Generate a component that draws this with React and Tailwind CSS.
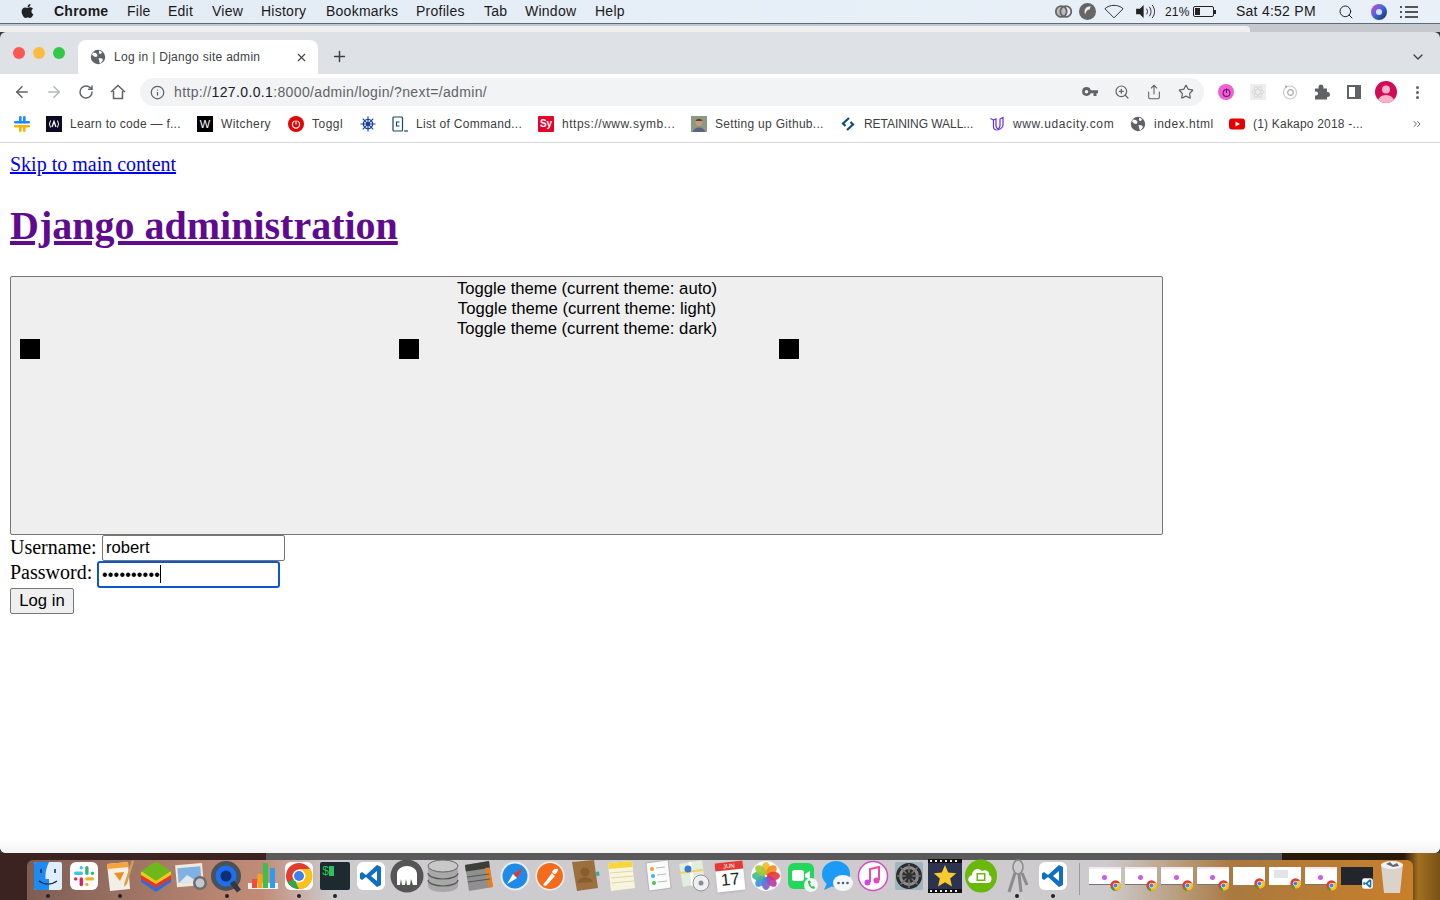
import React from 'react'
import {
  ArrowLeft,
  ArrowRight,
  ChevronDown,
  ChevronsRight,
  Info,
  Plus,
  RotateCw,
  Search,
  Share,
  Star,
  X,
  ZoomIn,
} from 'lucide-react'
import { FaApple } from 'react-icons/fa'

const sans = "font-['Liberation_Sans',Arial,sans-serif]"

const menuItems = [
  { label: 'File', w: 'w-[41px]' },
  { label: 'Edit', w: 'w-[44px]' },
  { label: 'View', w: 'w-[49px]' },
  { label: 'History', w: 'w-[65px]' },
  { label: 'Bookmarks', w: 'w-[90px]' },
  { label: 'Profiles', w: 'w-[68px]' },
  { label: 'Tab', w: 'w-[41px]' },
  { label: 'Window', w: 'w-[70px]' },
  { label: 'Help', w: 'w-[40px]' },
]

const Globe = ({ className }) => (
  <svg viewBox="0 0 16 16" className={className}>
    <circle cx="8" cy="8" r="7.2" fill="#5f6368" />
    <path d="M3 3.5l3 .5 1.5 2-1 2-2.5-.5L2 5.5zM9 1.5l3 1.5-1 2-2-.5zM8.5 9l3.5.5 1 1.5-2.5 3.500-1-1-.5-2.500z" fill="#fff" />
  </svg>
)

const SlackLogo = ({ className }) => (
  <svg viewBox="0 0 16 16" className={className}>
    <rect x="5" y="0" width="2.6" height="7.600" rx="1.300" fill="#1a8cff" />
    <rect x="9" y="0" width="2.6" height="7.600" rx="1.300" fill="#1a8cff" />
    <rect x="0" y="5" width="16" height="2.600" rx="1.300" fill="#1a8cff" />
    <rect x="0" y="9" width="16" height="2.600" rx="1.300" fill="#f7b500" />
    <rect x="5" y="9" width="2.6" height="7" rx="1.300" fill="#f7b500" />
    <rect x="9" y="9" width="2.6" height="7" rx="1.300" fill="#f7b500" />
  </svg>
)

const SlackGlyph = () => (
  <>
    <rect x="0" y="5" width="8" height="3" rx="1.500" fill="#36c5f0" />
    <rect x="5" y="0" width="3" height="3" rx="1.500" fill="#36c5f0" />
    <rect x="10" y="0" width="3" height="8" rx="1.500" fill="#2eb67d" />
    <rect x="15" y="5" width="3" height="3" rx="1.500" fill="#2eb67d" />
    <rect x="10" y="10" width="8" height="3" rx="1.500" fill="#ecb22e" />
    <rect x="10" y="15" width="3" height="3" rx="1.500" fill="#ecb22e" />
    <rect x="5" y="10" width="3" height="8" rx="1.500" fill="#e01e5a" />
    <rect x="0" y="10" width="3" height="3" rx="1.500" fill="#e01e5a" />
  </>
)

const bookmarkIcons = {
  code: (
    <svg viewBox="0 0 16 16" className="w-4 h-4">
      <rect width="16" height="16" fill="#0a0a23" />
      <path d="M4.500 4.500Q2.500 8 4.500 11.500M11.500 4.500Q13.500 8 11.500 11.500" stroke="#fff" strokeWidth="1" fill="none" />
      <path d="M6 11l2-5.500 2 5.500" stroke="#fff" strokeWidth="1.300" fill="none" />
    </svg>
  ),
  witchery: (
    <div className={`w-4 h-4 bg-black text-white text-[11px] leading-4 text-center ${sans}`}>W</div>
  ),
  toggl: (
    <svg viewBox="0 0 16 16" className="w-4 h-4">
      <circle cx="8" cy="8" r="8" fill="#e20505" />
      <circle cx="8" cy="8.500" r="3.600" fill="none" stroke="#fff" strokeWidth="1.200" />
      <path d="M8 4v4.500" stroke="#e20505" strokeWidth="3" />
      <path d="M8 4.500v4" stroke="#fff" strokeWidth="1.200" />
    </svg>
  ),
  helm: (
    <svg viewBox="0 0 16 16" className="w-4 h-4" fill="none" stroke="#1b3f9c">
      <circle cx="8" cy="8" r="4.600" strokeWidth="1.400" />
      <circle cx="8" cy="8" r="1.600" strokeWidth="1.200" />
      <path d="M8 .5v15M.5 8h15M2.700 2.700l10.600 10.600M13.300 2.700L2.700 13.300" strokeWidth="1.100" />
    </svg>
  ),
  command: (
    <svg viewBox="0 0 16 16" className="w-4 h-4" fill="none">
      <rect x="1" y="1" width="9.500" height="14" rx="1" stroke="#174a5b" strokeWidth="1.200" />
      <path d="M7.500 6H4.500v4h3" stroke="#174a5b" strokeWidth="1.200" />
      <path d="M12 15h4" stroke="#174a5b" strokeWidth="1.200" />
    </svg>
  ),
  symfony: (
    <div className={`w-4 h-4 bg-[#e8002d] rounded-[1px] text-white text-[10px] leading-4 text-center font-bold ${sans}`}>Sy</div>
  ),
  photo: (
    <svg viewBox="0 0 16 16" className="w-4 h-4">
      <rect width="16" height="16" fill="#8d9a80" />
      <circle cx="8" cy="6.500" r="3.400" fill="#c79a80" />
      <path d="M4.500 5c1-3 6-3 7 0z" fill="#59452f" />
      <path d="M2 16c.5-6 11.500-6 12 0z" fill="#5a6283" />
    </svg>
  ),
  retaining: (
    <svg viewBox="0 0 16 16" className="w-4 h-4" fill="none" stroke="#0f4c81" strokeWidth="2.200">
      <path d="M9 2L3 7.500l2.500 2.500" />
      <path d="M7 14l6-5.500-2.500-2.500" />
    </svg>
  ),
  udacity: (
    <svg viewBox="0 0 16 16" className="w-4 h-4" fill="none" stroke="#6b2cf5" strokeWidth="1.200">
      <path d="M1.500 2.500l3 1.500v6.500c0 2 1.500 3.500 3.500 3.500s6-2 6-5V1.500L11 3v6.500c0 2-1 3-2 3.500" />
      <path d="M4.500 4L7 3v7c0 1 .5 2 2 3" />
    </svg>
  ),
  globe: <Globe className="w-4 h-4" />,
  youtube: (
    <svg viewBox="0 0 16 16" className="w-4 h-4">
      <rect y="2.500" width="16" height="11" rx="3" fill="#e60000" />
      <path d="M6.500 5.500L11 8l-4.500 2.500z" fill="#fff" />
    </svg>
  ),
}

const bookmarks = [
  { icon: 'code', label: 'Learn to code — f...', w: 'w-[111px] tracking-[0.27px]' },
  { icon: 'witchery', label: 'Witchery', w: 'w-[51px] tracking-[0.42px]' },
  { icon: 'toggl', label: 'Toggl', w: 'w-[32px] tracking-[0.5px]' },
  { icon: 'helm' },
  { icon: 'command', label: 'List of Command...', w: 'w-[106px] tracking-[0.3px]' },
  { icon: 'symfony', label: 'https://www.symb...', w: 'w-[113px] tracking-[0.52px]' },
  { icon: 'photo', label: 'Setting up Github...', w: 'w-[109px] tracking-[0.3px]' },
  { icon: 'retaining', label: 'RETAINING WALL...', w: 'w-[109px] tracking-[-0.05px]' },
  { icon: 'udacity', label: 'www.udacity.com', w: 'w-[101px] tracking-[0.63px]' },
  { icon: 'globe', label: 'index.html', w: 'w-[59px] tracking-[0.5px]' },
  { icon: 'youtube', label: '(1) Kakapo 2018 -...', w: 'w-[109px] tracking-[0.2px]' },
]

const VsCode = () => (
  <svg viewBox="0 0 34 34" className="w-full h-full">
    <rect x="3" y="3" width="28" height="28" rx="6" fill="#fff" />
    <path d="M23 6l4 2v18l-4 2-11-10-4 3-2-1.500v-5L8 13l4 3zM23 12l-6 5 6 5z" fill="#0f6fc0" />
  </svg>
)

const dockIcons = [
  { key: 'finder', dot: true, icon: (
    <svg viewBox="0 0 34 34" className="w-full h-full">
      <rect x="3" y="3" width="28" height="28" rx="2" fill="#dfeefa" />
      <path d="M3 5a2 2 0 012-2h13c-3 6-4 12-3.500 17H18v11H5a2 2 0 01-2-2z" fill="#1f8af0" />
      <path d="M10 10v4M24 10v4" stroke="#0c2a4a" strokeWidth="1.500" />
      <path d="M8 22c5 4 13 4 18 0" stroke="#0c2a4a" strokeWidth="1.200" fill="none" />
    </svg>
  ) },
  { key: 'slack', icon: (
    <svg viewBox="0 0 34 34" className="w-full h-full">
      <rect x="3" y="3" width="28" height="28" rx="6" fill="#fff" />
      <g transform="translate(7 7) scale(1.120)"><SlackGlyph /></g>
    </svg>
  ) },
  { key: 'pages', dot: true, icon: (
    <svg viewBox="0 0 34 34" className="w-full h-full">
      <path d="M4 5l21-2 2 27-20 2z" fill="#f4efe6" />
      <path d="M4 5l21-2 .5 5L4.500 10z" fill="#f5a33a" />
      <path d="M11 14l10-1-4 9z" fill="#f58a1f" />
      <path d="M29 1l2 1-7 23-3 3 .5-4z" fill="#d9a04c" />
    </svg>
  ) },
  { key: 'bluestacks', icon: (
    <svg viewBox="0 0 34 34" className="w-full h-full">
      <path d="M2 20l15-7 15 7v3L17 33 2 23z" fill="#2b6fd6" />
      <path d="M2 16l15-7 15 7v4L17 29 2 20z" fill="#e53628" />
      <path d="M2 13l15-7 15 7v3L17 25 2 16z" fill="#f5c91c" />
      <path d="M2 12L14 4c2-1 4-1 6 0l12 8-15 10z" fill="#6fb81c" />
    </svg>
  ) },
  { key: 'preview', icon: (
    <svg viewBox="0 0 34 34" className="w-full h-full">
      <rect x="1" y="5" width="27" height="22" fill="#efe9dc" transform="rotate(-5 16 16)" />
      <rect x="3" y="8" width="23" height="15" fill="#7fb1e3" transform="rotate(-5 16 16)" />
      <path d="M4 24l8-8 8 5 6-2v4z" fill="#dfe8ee" />
      <circle cx="25" cy="24" r="7" fill="#6b6c6e" />
      <circle cx="25" cy="24" r="4.500" fill="#c4c8cc" />
    </svg>
  ) },
  { key: 'quicktime', dot: true, icon: (
    <svg viewBox="0 0 34 34" className="w-full h-full">
      <circle cx="16" cy="17" r="15" fill="#4a5258" />
      <circle cx="16" cy="17" r="10.500" fill="#1d6ff0" />
      <circle cx="16" cy="17" r="5.500" fill="#0e2f70" />
      <path d="M22 23l7 9" stroke="#33393e" strokeWidth="5" />
    </svg>
  ) },
  { key: 'numbers', icon: (
    <svg viewBox="0 0 34 34" className="w-full h-full">
      <path d="M2 24h30v6H2z" fill="#f1f1f1" />
      <rect x="6" y="20" width="5" height="9" fill="#f44b3f" />
      <rect x="11.500" y="15" width="5" height="14" fill="#f5a21c" />
      <rect x="17" y="4" width="5" height="25" fill="#3fbf49" />
      <rect x="24" y="9" width="5" height="20" fill="#2c9bf0" />
    </svg>
  ) },
  { key: 'chrome', dot: true, icon: (
    <svg viewBox="0 0 34 34" className="w-full h-full">
      <rect x="3" y="3" width="28" height="28" rx="6" fill="#fff" />
      <circle cx="17" cy="17" r="13" fill="#e33b2e" />
      <path d="M17 17L5.700 23.500A13 13 0 0017 30l6.500-6.500z" fill="#2fa84f" />
      <path d="M17 10h11.300A13 13 0 0117 30l-3-6z" fill="#fbc116" />
      <circle cx="17" cy="17" r="6.500" fill="#fff" />
      <circle cx="17" cy="17" r="5" fill="#3f7fe8" />
    </svg>
  ) },
  { key: 'terminal', dot: true, icon: (
    <svg viewBox="0 0 34 34" className="w-full h-full">
      <rect x="2" y="3" width="30" height="28" rx="2" fill="#1d2a30" />
      <text x="4" y="16" fontSize="12" fontFamily="Liberation Mono, monospace" fill="#25c456">$</text>
      <rect x="11" y="7" width="5" height="10" fill="#2bc160" />
    </svg>
  ) },
  { key: 'vscode', icon: <VsCode /> },
  { key: 'mamp', icon: (
    <svg viewBox="0 0 34 34" className="w-full h-full">
      <circle cx="17" cy="17" r="16.500" fill="#555" />
      <path d="M7 26V15c0-5 5-8 10-8s10 3 10 8v11h-4l-2-6-1 6h-3l-1-6-1 6h-3l-1-6-1 6z" fill="#fff" />
    </svg>
  ) },
  { key: 'db', icon: (
    <svg viewBox="0 0 34 34" className="w-full h-full">
      <path d="M2 7h30v20c0 3-6 6-15 6S2 30 2 27z" fill="#a8a8a8" />
      <path d="M2 14c0 3 6 6 15 6s15-3 15-6M2 21c0 3 6 6 15 6s15-3 15-6" stroke="#555" fill="none" strokeWidth="1.200" />
      <ellipse cx="17" cy="7" rx="15" ry="6" fill="#c8c8c8" stroke="#666" />
    </svg>
  ) },
  { key: 'calc', icon: (
    <svg viewBox="0 0 34 34" className="w-full h-full">
      <path d="M3 6l24-4 4 26-24 4z" fill="#8f8f8f" />
      <path d="M3 6l24-4 .8 7-24 3.500z" fill="#3b3f38" />
      <path d="M23 9l4.500-.5 3.500 19.500-4.500 .6z" fill="#ea7f1d" />
      <path d="M5 18l22-3M6 23l22-3" stroke="#555" />
    </svg>
  ) },
  { key: 'safari', icon: (
    <svg viewBox="0 0 34 34" className="w-full h-full">
      <circle cx="17" cy="17" r="14.500" fill="#e9edf1" />
      <circle cx="17" cy="17" r="12.500" fill="#1f8be8" />
      <path d="M25 9l-10 6 4 4z" fill="#e8362c" />
      <path d="M9 25l10-6-4-4z" fill="#fff" />
    </svg>
  ) },
  { key: 'postman', icon: (
    <svg viewBox="0 0 34 34" className="w-full h-full">
      <circle cx="17" cy="17" r="14.500" fill="#f5f1ec" />
      <circle cx="17" cy="17" r="13" fill="#f46b1d" />
      <path d="M10 26l9-12 3 3-9 10zM19 13c1-3 4-4 6-3 0 3-2 5-4 5z" fill="#fff" />
    </svg>
  ) },
  { key: 'contacts', icon: (
    <svg viewBox="0 0 34 34" className="w-full h-full">
      <path d="M3 3l22-2 4 28-21 3z" fill="#9c6f3e" />
      <circle cx="16" cy="13" r="4.500" fill="#8a5d2f" />
      <path d="M8 24c1-7 14-8 16-1z" fill="#8a5d2f" />
      <path d="M27 13l3-.5.500 4-3 .5z" fill="#26b0a5" />
    </svg>
  ) },
  { key: 'notes', icon: (
    <svg viewBox="0 0 34 34" className="w-full h-full">
      <path d="M3 4l24-2 3 27-24 3z" fill="#f8f5dc" />
      <path d="M3 4l24-2 .6 6-24 2z" fill="#f7d63d" />
      <path d="M5 14l23-2M6 19l23-2M6.500 24l23-2" stroke="#ddd7ad" />
    </svg>
  ) },
  { key: 'reminders', icon: (
    <svg viewBox="0 0 34 34" className="w-full h-full">
      <path d="M5 4l22-3 3 28-22 3z" fill="#fbfbfb" stroke="#888" strokeWidth="0.500" />
      <circle cx="11" cy="10" r="2" fill="#f5a31c" />
      <circle cx="12" cy="17" r="2" fill="#35b6ee" />
      <circle cx="13" cy="24" r="2" fill="#3ecf4a" />
      <path d="M15 9l9-1M16 16l9-1M17 23l9-1" stroke="#bbb" />
    </svg>
  ) },
  { key: 'maps', icon: (
    <svg viewBox="0 0 34 34" className="w-full h-full">
      <path d="M2 5l23-4 3 22-22 5z" fill="#dfeedd" />
      <path d="M13 3l3 24" stroke="#fff" strokeWidth="3" />
      <path d="M2 14l24-3" stroke="#f4cf60" strokeWidth="2" />
      <circle cx="11" cy="10" r="3.500" fill="#3a79d8" />
      <circle cx="24" cy="24" r="8" fill="#eef0f2" stroke="#8a8f96" />
      <circle cx="24" cy="24" r="2.500" fill="#8a8f96" />
    </svg>
  ) },
  { key: 'calendar', icon: (
    <div className={`w-[28px] h-[29px] mt-[3px] bg-white -rotate-6 shadow-sm flex flex-col items-center ${sans}`}>
      <div className="w-full h-[8px] bg-[#e23b35] text-white text-[6px] leading-[8px] text-center">JUN</div>
      <div className="text-[17px] leading-[20px] text-[#222]">17</div>
    </div>
  ) },
  { key: 'photos', icon: (
    <svg viewBox="0 0 34 34" className="w-full h-full">
      <circle cx="17" cy="17" r="15" fill="#fafafa" />
      <g transform="translate(17 17)">
        <ellipse cy="-7.500" rx="4.200" ry="6.500" fill="#f6b91e" opacity="0.900" />
        <ellipse cy="-7.500" rx="4.200" ry="6.500" fill="#f58a20" opacity="0.900" transform="rotate(45)" />
        <ellipse cy="-7.500" rx="4.200" ry="6.500" fill="#e8383a" opacity="0.900" transform="rotate(90)" />
        <ellipse cy="-7.500" rx="4.200" ry="6.500" fill="#c2359b" opacity="0.900" transform="rotate(135)" />
        <ellipse cy="-7.500" rx="4.200" ry="6.500" fill="#7c5cc9" opacity="0.900" transform="rotate(180)" />
        <ellipse cy="-7.500" rx="4.200" ry="6.500" fill="#3a8fe0" opacity="0.900" transform="rotate(225)" />
        <ellipse cy="-7.500" rx="4.200" ry="6.500" fill="#3fb98d" opacity="0.900" transform="rotate(270)" />
        <ellipse cy="-7.500" rx="4.200" ry="6.500" fill="#9bcb3b" opacity="0.900" transform="rotate(315)" />
      </g>
    </svg>
  ) },
  { key: 'facetime', icon: (
    <svg viewBox="0 0 34 34" className="w-full h-full">
      <rect x="3" y="4" width="26" height="26" rx="6" fill="#22d85a" />
      <rect x="7" y="11" width="12" height="11" rx="2.500" fill="#fff" />
      <path d="M20 15l5-3v9l-5-3z" fill="#fff" />
      <circle cx="26" cy="26" r="7" fill="#f4f4f4" />
      <path d="M23 22c0 4 2 7 6 8l1-2-2-1-1 .8c-1-1-1.500-2-2-3.500l1-.8-1-2z" fill="#26c55b" />
    </svg>
  ) },
  { key: 'messages', icon: (
    <svg viewBox="0 0 34 34" className="w-full h-full">
      <ellipse cx="15" cy="15" rx="14" ry="13" fill="#1c9bf6" />
      <path d="M6 24l-3 7 9-4z" fill="#1c9bf6" />
      <ellipse cx="22" cy="24" rx="10" ry="8" fill="#f5f6f8" />
      <circle cx="17.500" cy="24" r="1.300" fill="#4a5d7a" />
      <circle cx="22" cy="24" r="1.300" fill="#4a5d7a" />
      <circle cx="26.500" cy="24" r="1.300" fill="#4a5d7a" />
    </svg>
  ) },
  { key: 'itunes', icon: (
    <svg viewBox="0 0 34 34" className="w-full h-full">
      <circle cx="17" cy="17" r="14.500" fill="#fff" stroke="#d64bc8" strokeWidth="1.500" />
      <path d="M14 23V10l9-2v13" stroke="#ec4aa8" strokeWidth="2" fill="none" />
      <circle cx="11.500" cy="23.500" r="3" fill="#c94ce0" />
      <circle cx="20.500" cy="21.500" r="3" fill="#e24bb8" />
    </svg>
  ) },
  { key: 'prefs', icon: (
    <svg viewBox="0 0 34 34" className="w-full h-full">
      <rect x="3" y="3" width="28" height="28" rx="2" fill="#9fb5c0" />
      <circle cx="17" cy="17" r="13" fill="#2c2c2c" />
      <circle cx="17" cy="17" r="8.500" fill="none" stroke="#8d8d8d" strokeWidth="3" />
      <path d="M17 5v24M5 17h24M8.500 8.500l17 17M25.500 8.500l-17 17" stroke="#777" strokeWidth="1.500" />
      <circle cx="17" cy="17" r="3.500" fill="#333" />
    </svg>
  ) },
  { key: 'imovie', icon: (
    <svg viewBox="0 0 34 34" className="w-full h-full">
      <rect y="0" width="34" height="34" fill="#111" />
      <rect y="4" width="34" height="26" fill="#2b3350" />
      <path d="M2 2h2M7 2h2M12 2h2M17 2h2M22 2h2M27 2h2M2 32h2M7 32h2M12 32h2M17 32h2M22 32h2M27 32h2" stroke="#eee" strokeWidth="2" />
      <path d="M17 6l3.200 7.500 8 .7-6 5.300 1.800 8L17 23.200 10 27.500l1.800-8-6-5.300 8-.7z" fill="#f6cb2d" />
    </svg>
  ) },
  { key: 'torrent', icon: (
    <svg viewBox="0 0 34 34" className="w-full h-full">
      <ellipse cx="17" cy="17" rx="16" ry="16.500" fill="#69b80b" />
      <path d="M8 24c-5 0-5-7 0-8 0-6 7-8 10-4 4-2 8 1 7 4 4 1 3 8-1 8z" fill="#fff" />
      <rect x="12.500" y="14" width="9" height="8" fill="#69b80b" />
      <rect x="14" y="15.500" width="6" height="5" fill="#fff" />
    </svg>
  ) },
  { key: 'keychain', dot: true, icon: (
    <svg viewBox="0 0 34 34" className="w-full h-full" fill="none" stroke="#8b8b8b">
      <ellipse cx="18" cy="8" rx="5" ry="7" strokeWidth="1.500" />
      <path d="M15 14L9 33" strokeWidth="3" />
      <path d="M19 15l2 18" strokeWidth="3" />
      <path d="M22 14l5 12" strokeWidth="3" />
    </svg>
  ) },
  { key: 'vscode2', dot: true, icon: <VsCode /> },
]

const thumbs = ['app', 'app', 'app', 'app', 'blank', 'lines', 'app']

const Thumb = ({ kind }) => (
  <div className={`relative w-[32px] h-[18px] mt-[7px] ${kind === 'dark' ? 'bg-[#22252b]' : 'bg-white'} ${kind === 'app' ? 'border-t-2 border-t-[#f6e8ef] border-b border-b-[#777]' : ''}`}>
    {kind === 'app' && <div className="absolute left-[13px] top-[6px] w-[5px] h-[5px] rounded-full bg-[#c65ee6]" />}
    {kind === 'lines' && <div className="absolute left-[5px] top-[3px] w-[14px] h-[8px] bg-[#e3e3ea]" />}
    {kind === 'dark' ? (
      <div className="absolute left-[20px] top-[10px] w-[13px] h-[13px]"><VsCode /></div>
    ) : (
      <svg viewBox="0 0 34 34" className="absolute left-[21px] top-[11px] w-[11px] h-[11px]">
        <circle cx="17" cy="17" r="16" fill="#e33b2e" />
        <path d="M17 17L3 25a16 16 0 0014 8l7-7z" fill="#2fa84f" />
        <path d="M17 9h15a16 16 0 01-15 24l-3-6z" fill="#fbc116" />
        <circle cx="17" cy="17" r="7" fill="#3f7fe8" stroke="#fff" strokeWidth="2" />
      </svg>
    )}
  </div>
)

const MenuBar = () => (
  <div className={`h-[24px] shrink-0 flex items-center bg-gradient-to-r from-[#e3ecf5] to-[#e9f0f8] border-b border-[#5c6b78] text-[14px] tracking-[0.25px] text-[#1a1a1a] ${sans}`}>
    <FaApple className="ml-[20px] w-[15px] h-[16px] text-[#222] -mt-0.5" />
    <span className="ml-[19px] w-[73px] font-bold">Chrome</span>
    {menuItems.map(({ label, w }) => (
      <span key={label} className={w}>{label}</span>
    ))}
    <div className="ml-auto flex items-center">
      <svg viewBox="0 0 22 16" className="w-[20px] h-[15px]" fill="none" stroke="#666">
        <circle cx="8" cy="8" r="6" fill="#bdbdbd" strokeWidth="2" />
        <circle cx="13" cy="8" r="6" strokeWidth="2" />
      </svg>
      <svg viewBox="0 0 16 16" className="ml-[5px] w-[17px] h-[17px]">
        <circle cx="8" cy="8" r="8" fill="#666" />
        <path d="M11 3c-5 0-7 4-5 8 0-3 2-5 4-5z" fill="#eee" />
      </svg>
      <svg viewBox="0 0 22 16" className="ml-[8px] w-[20px] h-[15px]" fill="none" stroke="#222">
        <path d="M1 5c5-5 15-5 20 0L11 15z" />
      </svg>
      <svg viewBox="0 0 22 16" className="ml-[11px] w-[21px] h-[15px]" fill="none">
        <path d="M1 5h4l4-4v14l-4-4H1z" fill="#222" />
        <path d="M12 5c1.500 2 1.500 4 0 6M15 3c2.500 3 2.500 7 0 10M18 1c3.500 4 3.500 10 0 14" stroke="#222" />
      </svg>
      <span className="ml-[9px] text-[12px] tracking-[0.2px] w-[27px]">21%</span>
      <div className="ml-[1px] w-[21px] h-[11px] border border-[#222] rounded-[2px] p-[1px]">
        <div className="w-[5px] h-full bg-[#222]" />
      </div>
      <div className="w-[2px] h-[4px] bg-[#222]" />
      <span className="ml-[20px] w-[86px]">Sat 4:52 PM</span>
      <Search className="ml-[16px] w-[16px] h-[16px] text-[#222]" strokeWidth={1.5} />
      <div className="ml-[17px] w-[16px] h-[16px] rounded-full bg-gradient-to-br from-[#c63fd0] via-[#3c66d8] to-[#12324f] flex items-center justify-center">
        <div className="w-[6px] h-[6px] rounded-full bg-white/80" />
      </div>
      <svg viewBox="0 0 20 14" className="ml-[12px] mr-[21px] w-[20px] h-[14px]" stroke="#222" strokeWidth="1.600">
        <path d="M6 2h13M6 7h13M6 12h13M1 2h2M1 7h2M1 12h2" />
      </svg>
    </div>
  </div>
)

const BackWindow = () => (
  <div className="h-[8px] shrink-0 bg-[#c5c9cd] pt-[2px]">
    <div className="w-[1250px] h-[6px] bg-[#f0f0f0] rounded-tr-[4px]" />
  </div>
)

const TabStrip = () => (
  <div className="h-[42px] shrink-0 flex bg-[#dee1e6] rounded-t-[6px]">
    <div className="w-[78px] flex items-start pt-[15px] pl-[13px] gap-[8px]">
      <div className="w-[12px] h-[12px] rounded-full bg-[#fc5753]" />
      <div className="w-[12px] h-[12px] rounded-full bg-[#fdbc40]" />
      <div className="w-[12px] h-[12px] rounded-full bg-[#33c748]" />
    </div>
    <div className={`mt-[8px] w-[240px] h-[34px] bg-white rounded-t-[8px] flex items-center pl-[12px] text-[12px] tracking-[0.3px] text-[#3c4043] ${sans}`}>
      <Globe className="w-[16px] h-[16px] mr-[8px] shrink-0" />
      <span className="whitespace-nowrap">Log in | Django site admin</span>
      <X className="ml-auto mr-[10px] w-[13px] h-[13px] text-[#3c4043]" strokeWidth={2} />
    </div>
    <Plus className="ml-[13px] mt-[16px] w-[17px] h-[17px] text-[#3c4043]" strokeWidth={2} />
    <ChevronDown className="ml-auto mr-[14px] mt-[17px] w-[16px] h-[16px] text-[#3c4043]" strokeWidth={2} />
  </div>
)

const Toolbar = () => (
  <div className={`h-[35px] shrink-0 flex items-center pt-[1px] bg-white ${sans}`}>
    <ArrowLeft className="ml-[13px] w-[18px] h-[18px] text-[#5f6368]" strokeWidth={2} />
    <ArrowRight className="ml-[14px] w-[18px] h-[18px] text-[#b4b7bb]" strokeWidth={2} />
    <RotateCw className="ml-[15px] w-[16px] h-[16px] text-[#5f6368]" strokeWidth={2.2} />
    <svg viewBox="0 0 16 16" className="ml-[16px] w-[16px] h-[16px]" fill="none" stroke="#5f6368" strokeWidth="1.500">
      <path d="M1 8l7-6.500L15 8M3.500 7v7.500h9V7" />
    </svg>
    <div className="ml-[14px] w-[1064px] h-[28px] rounded-full bg-[#f1f3f4] flex items-center pl-[10px] pr-[10px]">
      <Info className="w-[15px] h-[15px] text-[#5f6368]" strokeWidth={2} />
      <span className="ml-[9px] text-[14px] tracking-[0.36px] text-[#5f6368] whitespace-nowrap">
        http://<span className="text-[#202124]">127.0.0.1</span>:8000/admin/login/?next=/admin/
      </span>
      <div className="ml-auto flex items-center gap-[16px]">
        <svg viewBox="0 0 16 10" className="w-[16px] h-[10px]" fill="#5f6368">
          <path d="M4.500 0a4.500 4.500 0 014.300 3.200H16v3h-1.500V9h-3V6.200H8.800A4.500 4.500 0 114.500 0zm0 3a1.800 1.800 0 100 3.600 1.800 1.800 0 000-3.600z" />
        </svg>
        <ZoomIn className="w-[16px] h-[16px] text-[#5f6368]" strokeWidth={1.8} />
        <Share className="w-[16px] h-[16px] text-[#5f6368]" strokeWidth={1.6} />
        <Star className="w-[16px] h-[16px] text-[#5f6368]" strokeWidth={1.8} />
      </div>
    </div>
    <div className="ml-[14px] w-[16px] h-[16px] rounded-full bg-[#f25fd0] flex items-center justify-center">
      <svg viewBox="0 0 10 10" className="w-[9px] h-[9px]" fill="none" stroke="#6a1a70" strokeWidth="1.200">
        <circle cx="5" cy="5.500" r="3.800" />
        <path d="M5 .5v5" />
      </svg>
    </div>
    <svg viewBox="0 0 16 16" className="ml-[16px] w-[16px] h-[16px]" fill="none" stroke="#d8d8d8">
      <rect width="16" height="16" fill="#eeeeee" stroke="none" />
      <ellipse cx="8" cy="8" rx="6" ry="2.400" />
      <ellipse cx="8" cy="8" rx="6" ry="2.400" transform="rotate(60 8 8)" />
      <ellipse cx="8" cy="8" rx="6" ry="2.400" transform="rotate(120 8 8)" />
    </svg>
    <svg viewBox="0 0 16 16" className="ml-[16px] w-[16px] h-[16px]" fill="none" stroke="#c9c9c9" strokeWidth="1.200">
      <circle cx="8" cy="8.500" r="6.500" />
      <circle cx="8.500" cy="8.500" r="2.800" stroke="#aaa" />
      <circle cx="4" cy="2.500" r="1" fill="#999" stroke="none" />
    </svg>
    <svg viewBox="0 0 16 16" className="ml-[16px] w-[16px] h-[16px]" fill="#5f6368">
      <path d="M1 4.500h3.500V3a2.500 2.500 0 015 0v1.500H13V8h.5a2.500 2.500 0 010 5H13v2.500H1V11.500h1a2 2 0 000-4H1z" />
    </svg>
    <div className="ml-[17px] w-[14px] h-[14px] border-2 border-[#5f6368] border-r-[6px]" />
    <svg viewBox="0 0 22 22" className="ml-[14px] w-[22px] h-[22px]">
      <clipPath id="avatar"><circle cx="11" cy="11" r="11" /></clipPath>
      <circle cx="11" cy="11" r="11" fill="#d30a55" />
      <g clipPath="url(#avatar)">
        <circle cx="11" cy="8.500" r="4" fill="#f8b4c8" />
        <ellipse cx="11" cy="20" rx="8" ry="6" fill="#f8b4c8" />
      </g>
    </svg>
    <div className="ml-[19px] flex flex-col gap-[2px]">
      <div className="w-[3px] h-[3px] rounded-full bg-[#5f6368]" />
      <div className="w-[3px] h-[3px] rounded-full bg-[#5f6368]" />
      <div className="w-[3px] h-[3px] rounded-full bg-[#5f6368]" />
    </div>
  </div>
)

const BookmarkBar = () => (
  <div className={`h-[34px] shrink-0 flex items-center pb-[3px] bg-white border-b border-[#d5d7da] pl-[14px] text-[12px] text-[#3c4043] ${sans}`}>
    <SlackLogo className="w-4 h-4 mr-[16px]" />
    {bookmarks.map(({ icon, label, w }) => (
      <div key={icon} className="flex items-center mr-[16px]">
        {bookmarkIcons[icon]}
        {label && <span className={`ml-[8px] whitespace-nowrap ${w}`}>{label}</span>}
      </div>
    ))}
    <ChevronsRight className="ml-auto mr-[17px] w-[12px] h-[12px] text-[#5f6368]" strokeWidth={2} />
  </div>
)

const DjangoPage = () => (
  <div className="relative flex-1 min-h-0 bg-white rounded-b-[6px] font-['Liberation_Serif','Times_New_Roman',serif] text-[20px] text-black">
    <div className="px-[10px] pt-[10px] flex flex-col items-start">
      <a className="h-[23px] leading-[23px] text-[#0000ee] underline">Skip to main content</a>
      <h1 className="mt-[27px] h-[46px] leading-[46px] text-[40px] font-bold text-[#5f0a8f] underline">Django administration</h1>
      <div className={`mt-[27px] w-[1153px] h-[259px] pt-[2px] bg-[#efefef] border border-[#767676] rounded-[2px] text-[16.67px] leading-[20px] text-black ${sans}`}>
        <div className="pl-[1px] text-center w-[1151px]">
          <div>Toggle theme (current theme: auto)</div>
          <div>Toggle theme (current theme: light)</div>
          <div>Toggle theme (current theme: dark)</div>
        </div>
        <div className="pl-[9px] grid grid-cols-[379px_380px_20px]">
          <div className="w-5 h-5 bg-black" />
          <div className="w-5 h-5 bg-black" />
          <div className="w-5 h-5 bg-black" />
        </div>
      </div>
      <div className="h-[26px] flex items-center">
        <span className="w-[92px] leading-[23px] -mt-[2px]">Username:</span>
        <div className={`w-[183px] h-[26px] border border-[#767676] rounded-[2px] pl-[3px] text-[16.67px] leading-[24px] ${sans}`}>robert</div>
      </div>
      <div className="h-[26px] flex items-center">
        <span className="w-[87px] leading-[23px] -mt-[3px]">Password:</span>
        <div className={`relative w-[183px] h-[27px] border-2 border-[#0a57d0] rounded-[3px] pl-[3px] leading-[23px] flex items-center ${sans}`}>
          <span className="text-[16px] tracking-[0.2px]">••••••••••</span>
          <div className="w-[1px] h-[18px] bg-black" />
        </div>
      </div>
      <div className={`mt-[1px] w-[64px] h-[26px] bg-[#efefef] border border-[#767676] rounded-[2px] text-[16.67px] leading-[24px] text-center ${sans}`}>Log in</div>
    </div>
    <div className="absolute left-0 right-0 bottom-0 h-[14px] bg-gradient-to-b from-white to-[#f3f3f3] rounded-b-[6px]" />
  </div>
)

const Dock = () => (
  <div className="h-[47px] shrink-0 bg-[linear-gradient(90deg,#3a2320_0%,#3a2320_18.5%,#5a5a5a_18.5%,#5a5a5a_89%,#2a1a08_89%,#2a1a08_97.5%,#a0701f_98.5%,#7a5217_100%)] pl-[27px] pr-[27px] flex items-end">
    <div className="relative h-[40px] w-full rounded-t-[6px] bg-[linear-gradient(90deg,#7d5d53_0%,#b98672_14%,#c08c78_17%,#cdcbcd_22%,#cdcbcd_78%,#a9793f_87%,#c97f2a_100%)] pl-[3px] flex items-start">
      {dockIcons.map(({ key, icon, dot }) => (
        <div key={key} className="relative w-[35.9px] h-[40px] shrink-0 flex justify-center">
          <div className="w-[34px] h-[34px] -mt-[1px] flex justify-center">{icon}</div>
          {dot && <div className="absolute left-1/2 -translate-x-1/2 bottom-[2px] w-[4px] h-[4px] rounded-full bg-[#222]" />}
        </div>
      ))}
      <div className="w-[1px] h-[32px] mt-[3px] ml-[8px] mr-[9px] bg-[#9a9a9a]" />
      <div className="flex gap-[4px]">
        {thumbs.map((kind, i) => <Thumb key={i} kind={kind} />)}
        <Thumb kind="dark" />
      </div>
      <svg viewBox="0 0 26 34" className="ml-[6px] w-[26px] h-[34px] shrink-0">
        <path d="M2 4h22l-3 29H5z" fill="#ddd" opacity="0.900" />
        <ellipse cx="13" cy="5" rx="11" ry="4" fill="#f1f1f1" />
        <path d="M7 4l4-2 3 3 4-2 2 3-6 1z" fill="#667" />
      </svg>
    </div>
  </div>
)

export default function App() {
  return (
    <div className="w-[1440px] h-[900px] overflow-hidden flex flex-col bg-[#3a3a3a]">
      <MenuBar />
      <BackWindow />
      <TabStrip />
      <Toolbar />
      <BookmarkBar />
      <DjangoPage />
      <Dock />
    </div>
  )
}
